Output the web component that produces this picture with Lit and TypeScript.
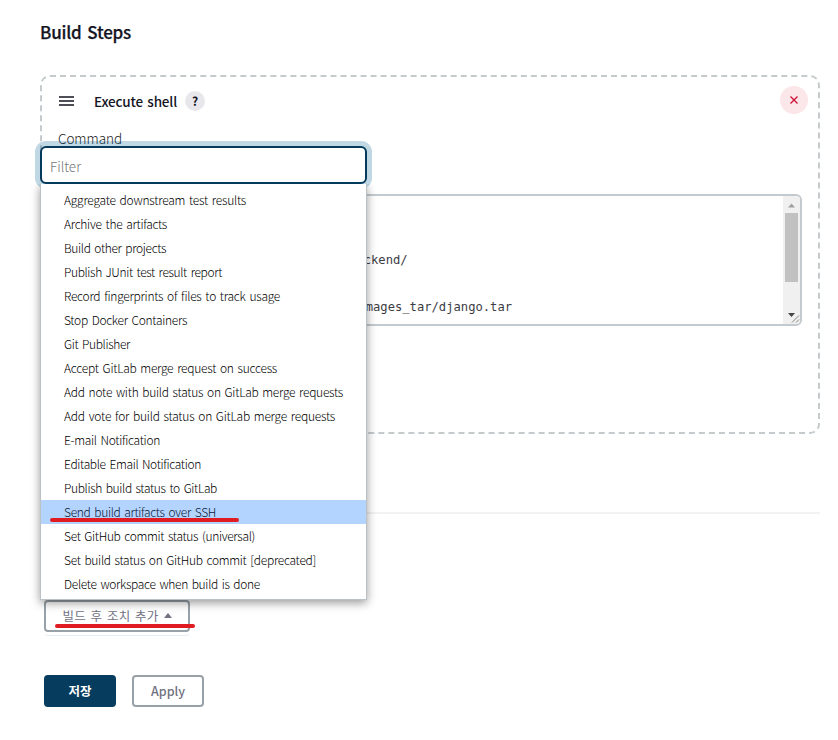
import { LitElement, html, css, svg } from "lit";
import { customElement, property, state } from "lit/decorators.js";
import { classMap } from "lit/directives/class-map.js";
import { styleMap } from "lit/directives/style-map.js";

interface Action {
  label: string;
  width: number;
}

const ACTIONS: Action[] = [
  { label: "Aggregate downstream test results", width: 182 },
  { label: "Archive the artifacts", width: 103 },
  { label: "Build other projects", width: 102 },
  { label: "Publish JUnit test result report", width: 158 },
  { label: "Record fingerprints of files to track usage", width: 216 },
  { label: "Stop Docker Containers", width: 123 },
  { label: "Git Publisher", width: 66 },
  { label: "Accept GitLab merge request on success", width: 213 },
  { label: "Add note with build status on GitLab merge requests", width: 279 },
  { label: "Add vote for build status on GitLab merge requests", width: 271 },
  { label: "E-mail Notification", width: 96 },
  { label: "Editable Email Notification", width: 137 },
  { label: "Publish build status to GitLab", width: 153 },
  { label: "Send build artifacts over SSH", width: 152 },
  { label: "Set GitHub commit status (universal)", width: 191 },
  { label: "Set build status on GitHub commit [deprecated]", width: 252 },
  { label: "Delete workspace when build is done", width: 196 },
];

/** A single line of text whose tracking is adjusted to fill a given width. */
@customElement("fit-text")
export class FitText extends LitElement {
  @property() text = "";
  @property({ type: Number }) width = 0;
  @state() private tracking = 0;

  static styles = css`
    :host { display: inline-block; white-space: pre; word-spacing: 0.12em; }
  `;

  firstUpdated() {
    const span = this.renderRoot.querySelector("span")!;
    const natural = span.getBoundingClientRect().width;
    this.tracking = (this.width - natural) / this.text.length;
  }

  render() {
    return html`<span style=${styleMap({ letterSpacing: `${this.tracking}px` })}>${this.text}</span>`;
  }
}

@customElement("action-menu")
export class ActionMenu extends LitElement {
  @state() private selected = 13;

  static styles = css`
    :host { display: block; width: 327px; }
    .filter {
      box-sizing: border-box;
      display: flex;
      align-items: center;
      height: 38px;
      padding: 1px 8px 0;
      border: 2px solid #043b5c;
      border-radius: 6px;
      background: #fff;
      box-shadow: 0 0 0 5px rgba(10, 100, 150, 0.26);
      color: #757575;
      font-size: 13.5px;
    }
    .list {
      box-sizing: border-box;
      position: relative;
      height: 416px;
      padding-top: 4px;
      border: 1px solid #bcc1c5;
      border-top: 0;
      background: #fff;
      box-shadow: 0 3px 9px rgba(0, 0, 0, 0.4);
      clip-path: inset(0 -16px -20px -16px);
    }
    .item {
      box-sizing: border-box;
      height: 24px;
      padding-left: 23px;
      line-height: 24px;
      font-size: 12px;
      color: #000;
    }
    .item.selected { background: #b3d4ff; color: #0a1a35; position: relative; }
    .mark {
      position: absolute;
      left: 9px;
      top: 18px;
      width: 189px;
      height: 4px;
      border-radius: 2px;
      background: #e01b22;
    }
  `;

  render() {
    return html`
      <div class="filter"><fit-text text="Filter" width="31"></fit-text></div>
      <div class="list">
        ${ACTIONS.map(
          (a, i) => html`<div class=${classMap({ item: true, selected: i === this.selected })}>
            <fit-text .text=${a.label} .width=${a.width}></fit-text>
            ${i === this.selected ? html`<span class="mark"></span>` : null}
          </div>`
        )}
      </div>
    `;
  }
}

@customElement("app-root")
export class AppRoot extends LitElement {
  static styles = css`
    :host {
      box-sizing: border-box;
      display: block;
      position: relative;
      width: 838px;
      height: 740px;
      padding: 18px 18px 0 40px;
      overflow: hidden;
      background: #fff;
      color: #14141f;
      font-family: "Noto Sans CJK KR", "Noto Sans", sans-serif;
      font-weight: 300;
    }
    .title { margin: 0; height: 28px; line-height: 28px; font-size: 17px; font-weight: 500; -webkit-text-stroke: 0.25px; }
    .step {
      box-sizing: border-box;
      height: 359px;
      margin-top: 29px;
      padding: 8px 16px 0;
      border: 2px dashed #c5cacd;
      border-radius: 10px;
    }
    .head { display: flex; align-items: center; height: 32px; }
    .grip { margin-left: 1px; width: 16px; height: 16px; }
    .name { margin-left: 19px; font-size: 13.5px; font-weight: 500; line-height: 32px; }
    .help {
      display: flex; align-items: center; justify-content: center;
      width: 20px; height: 20px; margin-left: 8px;
      border-radius: 50%; background: #e8e8ec;
      font-size: 12px; font-weight: 700; line-height: 20px;
    }
    .delete { width: 28px; height: 28px; margin: -2px -6px 0 auto; }
    .label { margin-top: 10px; height: 23px; line-height: 22px; font-size: 13.5px; color: #222; }
    .editor {
      box-sizing: border-box;
      display: flex;
      width: 744px;
      height: 132px;
      margin-top: 44px;
      border: 2px solid #c3cacf;
      border-radius: 6px;
      overflow: hidden;
    }
    .code { flex: 1; padding-top: 57px; font: 12.17px/15.67px "DejaVu Sans Mono", monospace; color: #3c3c44; }
    .line { height: 47px; white-space: pre; }
    .first { padding-left: 303.7px; }
    .second { padding-left: 305.7px; }
    .scroll { width: 17px; height: 128px; }
    .rule { height: 2px; margin-top: 78px; background: #f2f2f5; }
    .add, .save, .apply {
      box-sizing: border-box;
      display: flex;
      align-items: center;
      justify-content: center;
      height: 32px;
      padding-bottom: 1px;
      border-radius: 4px;
      font-size: 12.5px;
      font-weight: 500;
    }
    .add, .apply { border: 2px solid #98a1a8; background: #fff; color: #71717f; }
    .add { position: relative; width: 146px; margin: 86px 0 0 4px; font-weight: 400; box-shadow: 0 4px 0 -1px #fff, 0 5px 0 -1px #e3edf3; }
    .caret { width: 0; height: 0; margin-left: 5px; border: 4.5px solid transparent; border-top: 0; border-bottom: 5px solid #71717f; }
    .mark {
      position: absolute;
      left: 9px;
      top: 22px;
      width: 140px;
      height: 4px;
      border-radius: 2px;
      background: #e01b22;
    }
    .footer { display: flex; gap: 16px; margin: 43px 0 0 4px; }
    .save { width: 72px; background: #063c5e; color: #fff; font-weight: 700; }
    .apply { width: 72px; }
    .menu { position: absolute; left: 40px; top: 146px; }
  `;

  private grip() {
    return svg`<svg class="grip" viewBox="0 0 16 16">
      <path d="M0 4h15M0 8h15M0 12h15" fill="none" stroke="#14141f" stroke-width="1.5"/>
    </svg>`;
  }

  private remove() {
    return svg`<svg class="delete" viewBox="0 0 28 28">
      <circle cx="14" cy="14" r="14" fill="#fbe6ea"/>
      <path d="M10.500 10.500l7 7m0-7l-7 7" fill="none" stroke="#cc1035" stroke-width="1.3"/>
    </svg>`;
  }

  private scrollbar() {
    return svg`<svg class="scroll" viewBox="0 0 17 128">
      <path d="M0 0h17v128H0z" fill="#f0f0f0"/>
      <path d="M2 17h13v69H2z" fill="#c1c1c1"/>
      <path d="M5 11.5l3.500-4 3.500 4z" fill="#a0a0a0"/>
      <path d="M5 117h7l-3.500 4z" fill="#454545"/>
      <path d="M9 126.500l7-7M13 126.500l3-3" fill="none" stroke="#858585" stroke-width="1"/>
    </svg>`;
  }

  render() {
    return html`
      <h1 class="title"><fit-text text="Build Steps" width="91"></fit-text></h1>
      <section class="step">
        <div class="head">
          ${this.grip()}
          <div class="name"><fit-text text="Execute shell" width="83"></fit-text></div>
          <span class="help">?</span>
          ${this.remove()}
        </div>
        <div class="label"><fit-text text="Command" width="64"></fit-text></div>
        <div class="editor">
          <div class="code">
            <div class="line first">ckend/</div>
            <div class="line second">mages_tar/django.tar</div>
          </div>
          ${this.scrollbar()}
        </div>
      </section>
      <div class="rule"></div>
      <div class="add">
        <fit-text text="빌드 후 조치 추가" width="96"></fit-text><span class="caret"></span>
        <span class="mark"></span>
      </div>
      <div class="footer">
        <div class="save">저장</div>
        <div class="apply"><fit-text text="Apply" width="34"></fit-text></div>
      </div>
      <action-menu class="menu"></action-menu>
    `;
  }
}
